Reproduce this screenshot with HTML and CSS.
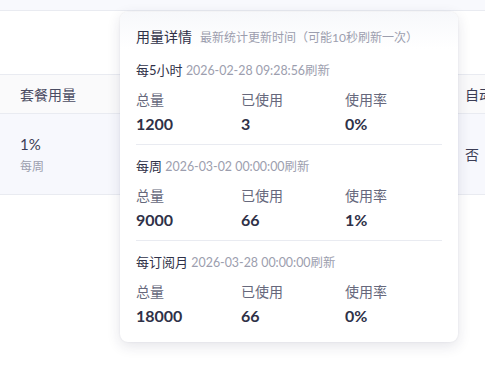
FILE: index.html
```html
<!DOCTYPE html>
<html lang="zh-CN">
<head>
  <meta charset="UTF-8">
  <title>套餐用量</title>
  <meta name="viewport" content="width=device-width, initial-scale=1.0">
  <link rel="stylesheet" href="styles.css">
</head>
<body>
  <div class="page">
    <div class="topbar"></div>

    <div class="table">
      <div class="row head">
        <div class="cell usage">套餐用量</div>
        <div class="cell spacer"></div>
        <div class="cell auto">自动续费</div>
      </div>
      <div class="row body">
        <div class="cell usage">
          <div class="pct">1%</div>
          <div class="period">每周</div>
        </div>
        <div class="cell spacer"></div>
        <div class="cell auto">否</div>
      </div>
    </div>

    <div class="popover">
      <div class="pop-head">
        <span class="pop-title">用量详情</span>
        <span class="pop-sub">最新统计更新时间（可能10秒刷新一次）</span>
      </div>

      <div class="section">
        <div class="sec-title">每5小时 <span class="sec-time">2026-02-28 09:28:56刷新</span></div>
        <div class="stats">
          <div class="label">总量</div>
          <div class="label">已使用</div>
          <div class="label">使用率</div>
          <div class="value">1200</div>
          <div class="value">3</div>
          <div class="value">0%</div>
        </div>
      </div>

      <div class="section">
        <div class="sec-title">每周 <span class="sec-time">2026-03-02 00:00:00刷新</span></div>
        <div class="stats">
          <div class="label">总量</div>
          <div class="label">已使用</div>
          <div class="label">使用率</div>
          <div class="value">9000</div>
          <div class="value">66</div>
          <div class="value">1%</div>
        </div>
      </div>

      <div class="section">
        <div class="sec-title">每订阅月 <span class="sec-time">2026-03-28 00:00:00刷新</span></div>
        <div class="stats">
          <div class="label">总量</div>
          <div class="label">已使用</div>
          <div class="label">使用率</div>
          <div class="value">18000</div>
          <div class="value">66</div>
          <div class="value">0%</div>
        </div>
      </div>
    </div>
  </div>
</body>
</html>
```

FILE: styles.css
```css
:root {
  --text-dark: #2f3148;
  --text-mid: #66687c;
  --text-light: #9c9eae;
  --border: #e9ebf1;
  --head-bg: #fafafb;
  --hover-bg: #f7f8fd;
}

* {
  box-sizing: border-box;
}

body {
  margin: 0;
  padding: 0;
  font-family: Lato, "Noto Sans CJK SC", sans-serif;
  background: #fff;
  color: var(--text-dark);
  overflow: hidden;
}

.page {
  position: relative;
  width: 485px;
  height: 367px;
  overflow: hidden;
}

.topbar {
  height: 11px;
  background: #f8f9fd;
  border-bottom: 1px solid var(--border);
}

.table {
  margin-top: 63px;
}

.row {
  display: flex;
  border-top: 1px solid var(--border);
}

.row.head {
  height: 39px;
  background: var(--head-bg);
  align-items: center;
  font-size: 14px;
  color: #4a4c62;
}

.row.body {
  height: 82px;
  background: var(--hover-bg);
  align-items: center;
  border-bottom: 1px solid var(--border);
}

.cell {
  flex: none;
}

.cell.usage {
  width: 240px;
  padding-left: 20px;
}

.cell.spacer {
  width: 225px;
}

.cell.auto {
  white-space: nowrap;
  font-size: 14px;
  color: #3b3d55;
}

.pct {
  font-size: 15px;
  line-height: 20px;
  color: #3b3d55;
}

.period {
  margin-top: 5px;
  font-size: 12px;
  line-height: 16px;
  color: var(--text-light);
}

.popover {
  position: absolute;
  left: 120px;
  top: 12px;
  width: 338px;
  background: #fff;
  border-radius: 8px;
  box-shadow: 0 4px 14px rgba(30, 35, 70, 0.12), 0 0 2px rgba(30, 35, 70, 0.08);
  padding: 0 16px 15px;
}

.pop-head {
  margin: 0 -16px;
  padding: 14px 16px 1px;
  border-radius: 8px 8px 0 0;
  background: linear-gradient(#f7f8fb, #fff);
  line-height: 20px;
  white-space: nowrap;
}

.pop-title {
  font-size: 14px;
  color: var(--text-dark);
  margin-right: 4px;
}

.pop-sub {
  font-size: 12px;
  color: var(--text-light);
}

.section {
  padding: 12px 0 9px;
  border-bottom: 1px solid var(--border);
}

.section:last-child {
  border-bottom: none;
  padding-bottom: 0;
}

.sec-title {
  font-size: 13px;
  line-height: 18px;
  color: var(--text-dark);
  white-space: nowrap;
}

.sec-time {
  font-size: 12.4px;
  color: var(--text-light);
}

.stats {
  display: grid;
  grid-template-columns: 105px 104px 1fr;
  margin-top: 11px;
}

.label {
  font-size: 14px;
  line-height: 18px;
  color: var(--text-mid);
}

.value {
  margin-top: 4px;
  font-size: 16px;
  font-weight: 700;
  line-height: 22px;
  color: var(--text-dark);
}
```
